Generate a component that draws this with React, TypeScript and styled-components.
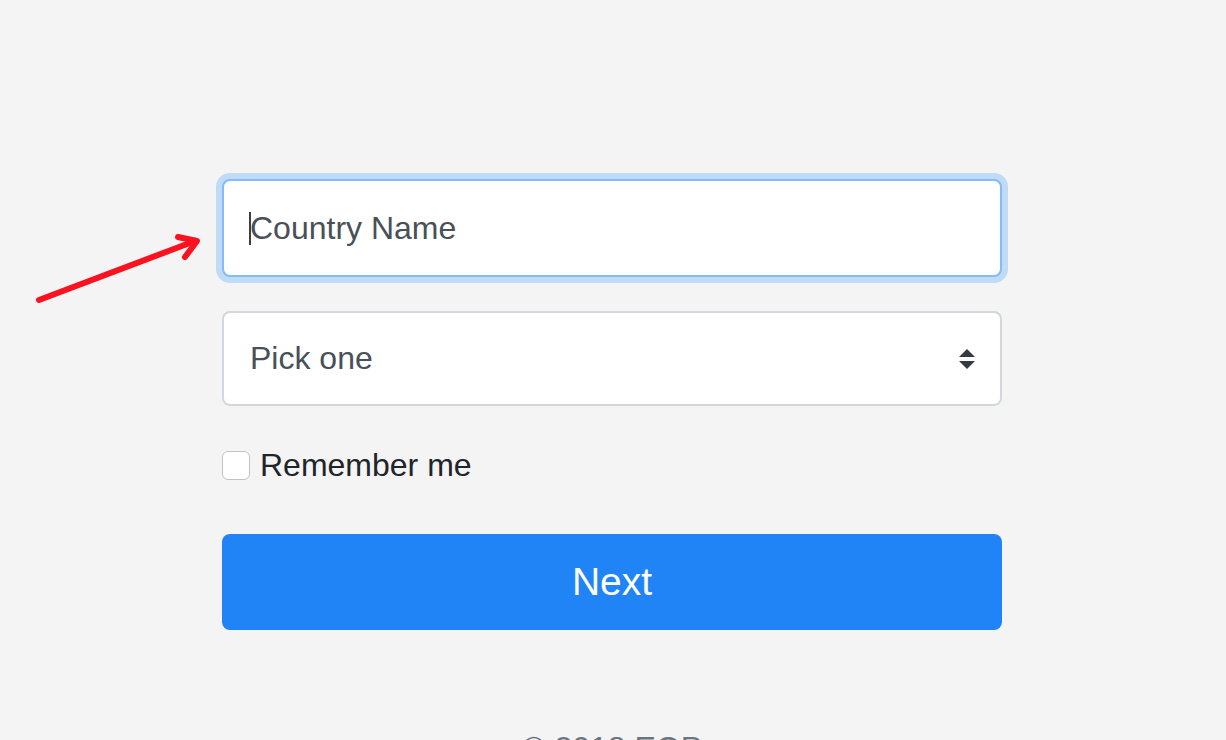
import React from "react";
import styled, { createGlobalStyle } from "styled-components";

const GlobalStyle = createGlobalStyle`
  html, body {
    margin: 0;
    padding: 0;
    background: #f4f4f4;
  }
  body {
    font-family: "Liberation Sans", Arial, sans-serif;
    color: #212529;
    overflow: hidden;
  }
`;

const Page = styled.div`
  position: relative;
  width: 1226px;
  height: 740px;
  overflow: hidden;
  display: flex;
  align-items: flex-start;
  justify-content: center;
  padding-right: 2px;
  box-sizing: border-box;
`;

const Form = styled.form`
  width: 780px;
  padding-top: 179px;
  display: flex;
  flex-direction: column;
  flex-shrink: 0;

  & > * {
    flex-shrink: 0;
  }
`;

const Field = styled.div`
  position: relative;
`;

const TextInput = styled.input`
  width: 100%;
  height: 98px;
  box-sizing: border-box;
  padding: 0 26px;
  font-family: inherit;
  font-size: 32px;
  color: #495057;
  background: #fff;
  border: 2px solid #84bcf7;
  border-radius: 8px;
  box-shadow: 0 0 0 6px #c0dbf8;
  outline: none;

  &::placeholder {
    color: #495057;
    opacity: 1;
  }
`;

const Caret = styled.span`
  position: absolute;
  left: 27px;
  top: 33px;
  width: 2px;
  height: 33px;
  background: #3a3f44;
`;

const SelectBox = styled.div`
  margin-top: 34px;
  height: 95px;
  box-sizing: border-box;
  padding: 0 24px 0 26px;
  display: flex;
  align-items: center;
  justify-content: space-between;
  background: #fff;
  border: 2px solid #d3d6da;
  border-radius: 8px;
  font-size: 32px;
  color: #495057;
`;

const CheckRow = styled.label`
  margin-top: 45px;
  display: flex;
  align-items: center;
  gap: 10px;
  font-size: 32px;
  color: #212529;
  line-height: 29px;
`;

const Box = styled.span`
  width: 28px;
  height: 29px;
  box-sizing: border-box;
  border: 1px solid #c2c2c2;
  border-radius: 6px;
  background: #fff;
`;

const Button = styled.button`
  margin-top: 54px;
  height: 96px;
  border: none;
  border-radius: 8px;
  background: #2184f6;
  color: #fff;
  font-family: inherit;
  font-size: 39px;
  cursor: pointer;
`;

const Footer = styled.p`
  margin: 94px 0 0;
  text-align: center;
  font-size: 32px;
  line-height: 48px;
  color: #6c757d;
`;

const Pointer = styled.svg`
  position: absolute;
  left: 30px;
  top: 226px;
`;

const SortArrows = () => (
  <svg width="18" height="22" viewBox="0 0 18 22">
    <path d="M9 1 L17 9 L1 9 Z" fill="#343a40" />
    <path d="M1 13 L17 13 L9 21 Z" fill="#343a40" />
  </svg>
);

const App: React.FC = () => {
  return (
    <>
      <GlobalStyle />
      <Page>
        <Pointer width="180" height="84" viewBox="0 0 180 84">
          <g
            stroke="#fb1220"
            strokeWidth="6"
            strokeLinecap="round"
            strokeLinejoin="round"
            fill="none"
          >
            <path d="M9 74 L165 15" />
            <path d="M148 11 L167 15 L155 31" />
          </g>
        </Pointer>
        <Form onSubmit={(e) => e.preventDefault()}>
          <Field>
            <TextInput placeholder="Country Name" />
            <Caret />
          </Field>
          <SelectBox>
            <span>Pick one</span>
            <SortArrows />
          </SelectBox>
          <CheckRow>
            <Box />
            Remember me
          </CheckRow>
          <Button type="submit">Next</Button>
          <Footer>© 2018 EOP</Footer>
        </Form>
      </Page>
    </>
  );
};

export default App;
